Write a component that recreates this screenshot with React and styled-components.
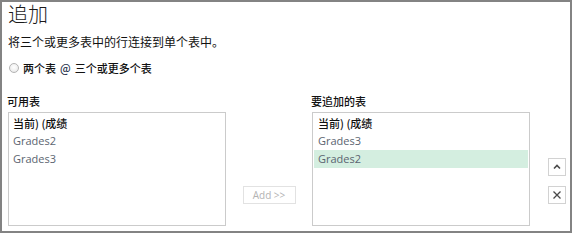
import React from "react";
import styled, { createGlobalStyle } from "styled-components";

const Global = createGlobalStyle`
  html, body { margin: 0; padding: 0; background: #fff; }
  body { font-family: "Noto Sans CJK SC", "Noto Sans", sans-serif; }
  * { box-sizing: border-box; }
`;

const Frame = styled.div`
  width: 572px;
  height: 233px;
  border: 2px solid #838383;
  padding: 0 6px;
  display: flex;
  flex-direction: column;
  font-family: "Noto Sans CJK SC", sans-serif;
  color: #111;
`;

const Title = styled.div`
  font-size: 20px;
  line-height: 24px;
  font-weight: 300;
  color: #1a1a1a;
`;

const Desc = styled.div`
  margin-top: 8px;
  font-size: 12px;
  line-height: 16px;
`;

const RadioRow = styled.div`
  margin-top: 10px;
  display: flex;
  align-items: center;
  gap: 3px;
  font-size: 11px;
  line-height: 16px;
  font-weight: 500;
`;

const Radio = styled.span`
  width: 10px;
  height: 10px;
  border-radius: 50%;
  border: 1px solid #b4b4b4;
  background: radial-gradient(circle at 50% 40%, #fff 0%, #f0f0f0 60%, #dcdcdc 100%);
  margin-right: 1px;
  margin-left: 1px;
`;

const At = styled.span`
  color: #26304a;
  margin: 0 1px;
`;

const Panels = styled.div`
  margin-top: 18px;
  display: grid;
  grid-template-columns: 218px 86px 218px 1fr;
`;

const Column = styled.div`
  display: flex;
  flex-direction: column;
`;

const Label = styled.div`
  font-size: 11px;
  line-height: 15px;
  font-weight: 500;
  margin-bottom: 3px;
  margin-left: -1px;
`;

const ListBox = styled.div`
  height: 114px;
  border: 1px solid #cbcbcb;
  padding: 1px;
  display: flex;
  flex-direction: column;
`;

const Row = styled.div`
  height: 18px;
  line-height: 18px;
  padding-left: ${(p) => (p.$wide ? "4px" : "3px")};
  font-size: 11px;
  font-family: ${(p) =>
    p.$cjk ? `"Noto Sans CJK SC", sans-serif` : `"Open Sans", "Noto Sans", sans-serif`};
  font-weight: ${(p) => (p.$cjk ? 500 : 400)};
  color: ${(p) => (p.$cjk ? "#111" : "#5b6470")};
  background: ${(p) => (p.$selected ? "#d4eee0" : "transparent")};
  white-space: nowrap;
`;

const Middle = styled.div`
  display: flex;
  align-items: flex-end;
  justify-content: center;
  padding-bottom: 22px;
`;

const AddButton = styled.button`
  width: 53px;
  height: 18px;
  padding: 0;
  border: 1px solid #e2e2e2;
  background: #fff;
  color: #b3b3b3;
  font-family: "Open Sans", "Noto Sans", sans-serif;
  font-size: 10px;
  line-height: 16px;
`;

const Side = styled.div`
  display: flex;
  flex-direction: column;
  justify-content: flex-end;
  gap: 10px;
  padding: 0 0 22px 18px;
`;

const IconButton = styled.button`
  width: 18px;
  height: 18px;
  padding: 0;
  border: 1px solid #d2d2d2;
  background: #fff;
  display: flex;
  align-items: center;
  justify-content: center;
`;

export default function App() {
  return (
    <>
      <Global />
      <Frame>
        <Title>追加</Title>
        <Desc>将三个或更多表中的行连接到单个表中。</Desc>
        <RadioRow>
          <Radio />
          <span>两个表</span>
          <At>@</At>
          <span>三个或更多个表</span>
        </RadioRow>
        <Panels>
          <Column>
            <Label>可用表</Label>
            <ListBox>
              <Row $cjk>当前) (成绩</Row>
              <Row>Grades2</Row>
              <Row>Grades3</Row>
            </ListBox>
          </Column>
          <Middle>
            <AddButton>Add &gt;&gt;</AddButton>
          </Middle>
          <Column>
            <Label>要追加的表</Label>
            <ListBox>
              <Row $cjk $wide>当前) (成绩</Row>
              <Row $wide>Grades3</Row>
              <Row $wide $selected>Grades2</Row>
            </ListBox>
          </Column>
          <Side>
            <IconButton aria-label="上移">
              <svg width="10" height="10" viewBox="0 0 10 10">
                <polyline points="2,6.5 5,3.5 8,6.5" fill="none" stroke="#4a4a4a" strokeWidth="1.6" />
              </svg>
            </IconButton>
            <IconButton aria-label="删除">
              <svg width="10" height="10" viewBox="0 0 10 10">
                <path d="M1.5 1.5 L8.5 8.5 M8.5 1.5 L1.5 8.5" stroke="#4a4a4a" strokeWidth="1.3" />
              </svg>
            </IconButton>
          </Side>
        </Panels>
      </Frame>
    </>
  );
}
